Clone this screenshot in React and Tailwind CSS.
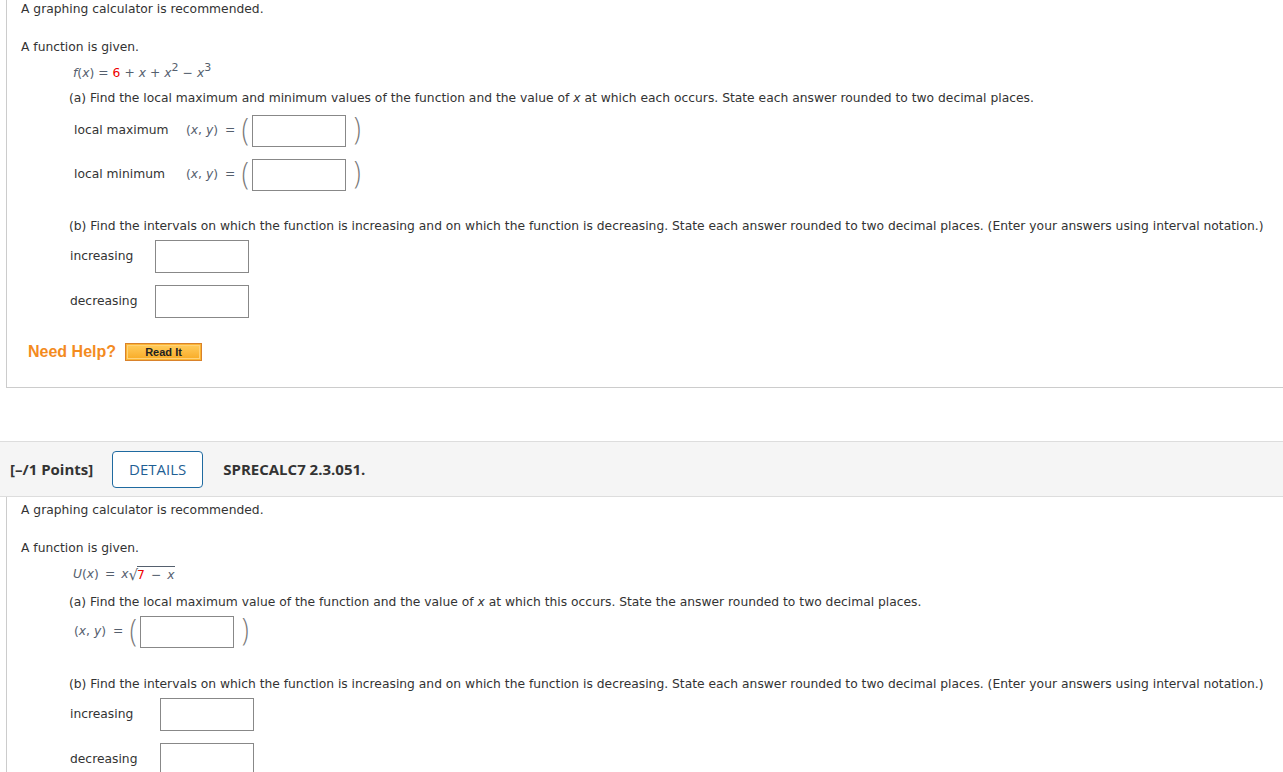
import React from "react";

const mathColor = "text-[#55606e]";

function Paren({ children }) {
  return (
    <span className="inline-block font-['Open_Sans',sans-serif] text-[32px] leading-none font-light text-[#777] scale-x-[0.8] -translate-y-[3px]">
      {children}
    </span>
  );
}

function AnswerBox({ w = "w-[94px]", h = "h-[33px]" }) {
  return <div className={`${w} ${h} border border-[#888] bg-white`} />;
}

function PairRow({ label, labelW = "w-[112px]", boxW = "w-[94px]" }) {
  return (
    <div className="flex items-center h-[33px]">
      {label && <div className={labelW}>{label}</div>}
      <span className={`${mathColor} mr-[6px]`}>
        (<span className="italic">x</span>, <span className="italic">y</span>)
        <span className="ml-[7px]">=</span>
      </span>
      <Paren>(</Paren>
      <div className="ml-[2px]">
        <AnswerBox w={boxW} h="h-[32px]" />
      </div>
      <span className="ml-[7px]">
        <Paren>)</Paren>
      </span>
    </div>
  );
}

function IntervalRow({ label, labelW }) {
  return (
    <div className="flex items-center">
      <div className={labelW}>{label}</div>
      <AnswerBox w="w-[94px]" h="h-[33px]" />
    </div>
  );
}

export default function App() {
  return (
    <div className="min-h-screen bg-white font-['DejaVu_Sans',Verdana,sans-serif] text-[12.3px] text-[#333] whitespace-nowrap overflow-hidden">
      {/* first question */}
      <div className="ml-[6px] border-l border-b border-[#ccc] pl-[14px] pb-[25px]">
        <div className="pt-[1px] h-[18px] flex items-center">A graphing calculator is recommended.</div>
        <div className="mt-[20px] h-[18px] flex items-center">A function is given.</div>
        <div className={`mt-[8px] h-[18px] flex items-center ml-[52px] ${mathColor}`}>
          <span className="italic">f</span>(<span className="italic">x</span>)
          <span className="mx-[4px]">=</span>
          <span className="text-[#e00]">6</span>
          <span className="mx-[4px]">+</span>
          <span className="italic">x</span>
          <span className="mx-[4px]">+</span>
          <span className="italic">x</span>
          <sup className="text-[11px] -top-[5px]">2</sup>
          <span className="mx-[4px]">−</span>
          <span className="italic">x</span>
          <sup className="text-[11px] -top-[5px]">3</sup>
        </div>
        <div className="mt-[7px] h-[18px] flex items-center ml-[48px]">
          (a) Find the local maximum and minimum values of the function and the value of&nbsp;
          <span className="italic">x</span>&nbsp;at which each occurs. State each answer rounded to two decimal places.
        </div>
        <div className="mt-[7px] ml-[53px]">
          <PairRow label="local maximum" />
        </div>
        <div className="mt-[11px] ml-[53px]">
          <PairRow label="local minimum" />
        </div>
        <div className="mt-[26px] h-[18px] flex items-center ml-[48px]">
          (b) Find the intervals on which the function is increasing and on which the function is decreasing. State each answer rounded to two decimal places. (Enter your answers using interval notation.)
        </div>
        <div className="mt-[5px] ml-[49px]">
          <IntervalRow label="increasing" labelW="w-[85px]" />
        </div>
        <div className="mt-[12px] ml-[49px]">
          <IntervalRow label="decreasing" labelW="w-[85px]" />
        </div>
        <div className="mt-[24px] ml-[7px] h-[20px] flex items-center">
          <span className="font-['Liberation_Sans'] font-bold text-[16px] text-[#f38b1f]">Need Help?</span>
          <button className="ml-[9px] w-[77px] h-[18px] border border-[#d9822b] bg-[#fbb533] p-[1px]">
            <div className="w-full h-full border border-[#ffd27a] bg-gradient-to-b from-[#ffc955] to-[#f9ae2a] flex items-center justify-center font-['Liberation_Sans'] font-bold text-[11px] text-[#222]">
              Read It
            </div>
          </button>
        </div>
      </div>

      {/* second question header */}
      <div className="mt-[53px] h-[56px] bg-[#f5f5f5] border-t border-b border-[#ddd] flex items-center pl-[10px] font-['Open_Sans',sans-serif] text-[15px]">
        <span className="font-bold text-[#333]">[–/1 Points]</span>
        <div className="ml-[19px] w-[91px] h-[37px] border border-[#1f6aa0] rounded-[4px] bg-white flex items-center justify-center text-[#1f5f94]">
          DETAILS
        </div>
        <span className="ml-[20px] font-bold text-[#333]">SPRECALC7 2.3.051.</span>
      </div>

      {/* second question */}
      <div className="ml-[6px] border-l border-[#ccc] pl-[14px] pb-[20px]">
        <div className="pt-[4px] h-[22px] flex items-center">A graphing calculator is recommended.</div>
        <div className="mt-[20px] h-[18px] flex items-center">A function is given.</div>
        <div className={`mt-[8px] h-[18px] flex items-center ml-[52px] ${mathColor}`}>
          <span className="italic">U</span>(<span className="italic">x</span>)
          <span className="mx-[6px]">=</span>
          <span className="italic">x</span>
          <span className="text-[15px] -mr-[1px] translate-y-[1px]">√</span>
          <span className="border-t border-[#55606e] pt-[1px] leading-[15px]">
            <span className="text-[#e00]">7</span>
            <span className="mx-[6px]">−</span>
            <span className="italic">x</span>
          </span>
        </div>
        <div className="mt-[10px] h-[18px] flex items-center ml-[48px]">
          (a) Find the local maximum value of the function and the value of&nbsp;
          <span className="italic">x</span>&nbsp;at which this occurs. State the answer rounded to two decimal places.
        </div>
        <div className="mt-[4px] ml-[53px]">
          <PairRow />
        </div>
        <div className="mt-[27px] h-[18px] flex items-center ml-[48px]">
          (b) Find the intervals on which the function is increasing and on which the function is decreasing. State each answer rounded to two decimal places. (Enter your answers using interval notation.)
        </div>
        <div className="mt-[5px] ml-[49px]">
          <IntervalRow label="increasing" labelW="w-[90px]" />
        </div>
        <div className="mt-[12px] ml-[49px]">
          <IntervalRow label="decreasing" labelW="w-[90px]" />
        </div>
      </div>
    </div>
  );
}
